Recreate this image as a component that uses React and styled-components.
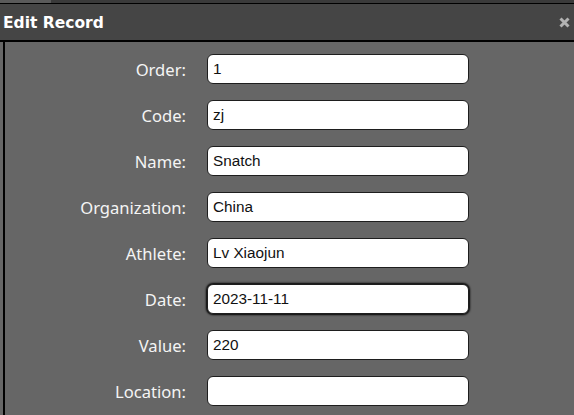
import React from "react";
import styled, { createGlobalStyle } from "styled-components";

const Global = createGlobalStyle`
  html, body { margin: 0; padding: 0; background: #666; overflow: hidden; }
  body { width: 574px; height: 415px; }
`;

const TopStrip = styled.div`
  display: flex;
  height: 3px;
  border-bottom: 1px solid #000;
`;

const StripSeg = styled.div`
  width: ${(p) => p.$w || "auto"};
  flex: ${(p) => (p.$grow ? 1 : "none")};
  background: ${(p) => p.$bg};
`;

const Header = styled.div`
  display: flex;
  align-items: center;
  justify-content: space-between;
  height: 36px;
  background: #454545;
  border-bottom: 2px solid #000;
  padding: 0 3px 0 3px;
`;

const Title = styled.div`
  font-family: "DejaVu Sans", Verdana, sans-serif;
  font-weight: bold;
  font-size: 15.5px;
  color: #fff;
  padding-top: 1px;
`;

const Close = styled.svg`
  display: block;
  width: 11px;
  height: 11px;
  margin-right: 1px;
  margin-top: 1px;
`;

const Body = styled.div`
  border-left: 2px solid #000;
  margin-left: 3px;
  background: #666;
  height: 373px;
  padding-top: 12px;
  box-sizing: border-box;
`;

const Form = styled.div`
  display: grid;
  grid-template-columns: 181px 262px;
  column-gap: 21px;
  row-gap: 16px;
  align-items: center;
`;

const Label = styled.label`
  text-align: right;
  font-family: "Noto Sans", "Open Sans", sans-serif;
  font-size: 16.6px;
  color: #f4f4f4;
`;

const Input = styled.input`
  box-sizing: border-box;
  width: 262px;
  height: 30px;
  border: 1px solid #1e1e1e;
  border-radius: 6px;
  background: #fff;
  padding: 0 5px;
  font-family: "Liberation Sans", Arial, sans-serif;
  font-size: 15.3px;
  color: #111;
  outline: none;
  box-shadow: ${(p) => (p.$focused ? "0 0 2px 1px #000" : "none")};
`;

const fields = [
  ["Order", "1"],
  ["Code", "zj"],
  ["Name", "Snatch"],
  ["Organization", "China"],
  ["Athlete", "Lv Xiaojun"],
  ["Date", "2023-11-11", true],
  ["Value", "220"],
  ["Location", ""],
];

export default function App() {
  return (
    <>
      <Global />
      <TopStrip>
        <StripSeg $w="51px" $bg="#5a5a5a" />
        <StripSeg $grow $bg="#3a3a3a" />
      </TopStrip>
      <Header>
        <Title>Edit Record</Title>
        <Close viewBox="0 0 11 11" aria-label="Close">
          <path d="M1.5 1.5 L9.5 9.5 M9.5 1.5 L1.5 9.5" stroke="#b2b2b2" strokeWidth="3" strokeLinecap="butt" fill="none" />
        </Close>
      </Header>
      <Body>
        <Form>
          {fields.map(([label, value, focused]) => (
            <React.Fragment key={label}>
              <Label>{label}:</Label>
              <Input defaultValue={value} $focused={focused} readOnly />
            </React.Fragment>
          ))}
        </Form>
      </Body>
    </>
  );
}
